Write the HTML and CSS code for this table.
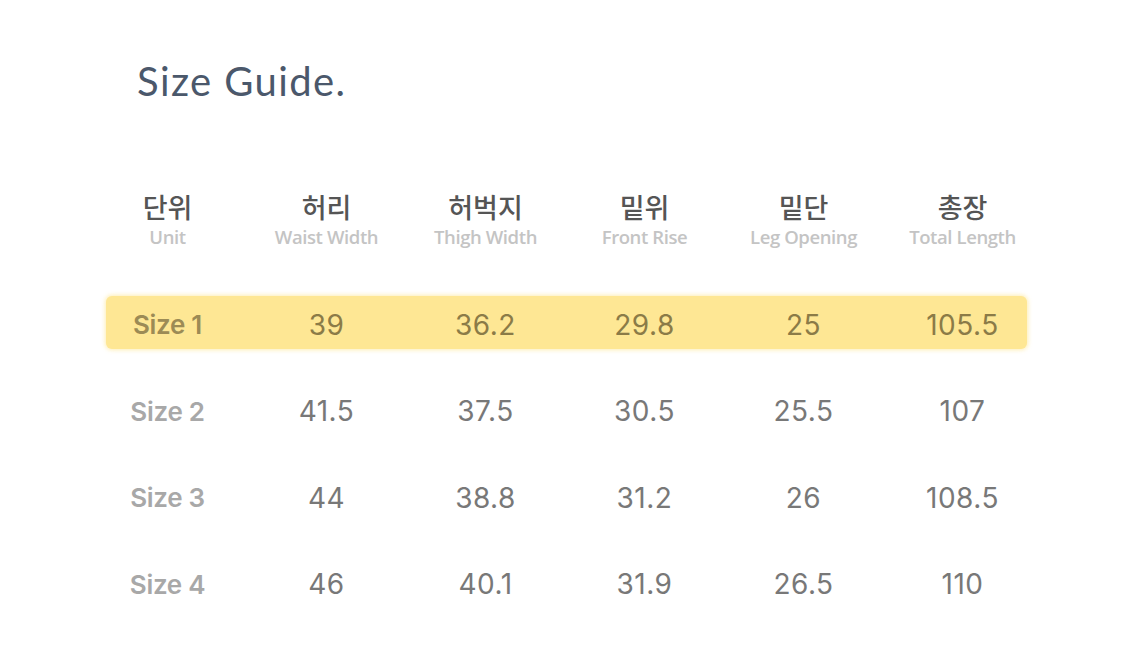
FILE: index.html
```html
<!DOCTYPE html>
<html lang="ko">
<head>
<meta charset="utf-8">
<title>Size Guide</title>
<link rel="stylesheet" href="styles.css">
</head>
<body>
<main class="page">
  <h1 class="title">Size Guide.</h1>
  <div class="table">
    <div class="row head">
      <div class="cell"><span class="ko">단위</span><span class="en">Unit</span></div>
      <div class="cell"><span class="ko">허리</span><span class="en">Waist Width</span></div>
      <div class="cell"><span class="ko">허벅지</span><span class="en">Thigh Width</span></div>
      <div class="cell"><span class="ko">밑위</span><span class="en">Front Rise</span></div>
      <div class="cell"><span class="ko">밑단</span><span class="en">Leg Opening</span></div>
      <div class="cell"><span class="ko">총장</span><span class="en">Total Length</span></div>
    </div>
    <div class="row data hl">
      <div class="cell label">Size 1</div>
      <div class="cell">39</div>
      <div class="cell">36.2</div>
      <div class="cell">29.8</div>
      <div class="cell">25</div>
      <div class="cell">105.5</div>
    </div>
    <div class="row data">
      <div class="cell label">Size 2</div>
      <div class="cell">41.5</div>
      <div class="cell">37.5</div>
      <div class="cell">30.5</div>
      <div class="cell">25.5</div>
      <div class="cell">107</div>
    </div>
    <div class="row data">
      <div class="cell label">Size 3</div>
      <div class="cell">44</div>
      <div class="cell">38.8</div>
      <div class="cell">31.2</div>
      <div class="cell">26</div>
      <div class="cell">108.5</div>
    </div>
    <div class="row data">
      <div class="cell label">Size 4</div>
      <div class="cell">46</div>
      <div class="cell">40.1</div>
      <div class="cell">31.9</div>
      <div class="cell">26.5</div>
      <div class="cell">110</div>
    </div>
  </div>
</main>
</body>
</html>
```
FILE: styles.css
```css
html, body {
  margin: 0;
  padding: 0;
  background: #ffffff;
}
.page {
  width: 1125px;
  height: 672px;
  box-sizing: border-box;
  padding: 0 0 0 88px;
  font-family: "Inter", "Noto Sans CJK KR", sans-serif;
}
.title {
  margin: 0;
  padding: 56px 0 0 49px;
  height: 50px;
  font-family: "Lato", sans-serif;
  font-weight: 400;
  font-size: 40px;
  line-height: 50px;
  color: #4b586b;
  letter-spacing: 1.4px;
}
.table {
  margin-top: 79px;
  width: 954px;
}
.row {
  display: grid;
  grid-template-columns: repeat(6, 159px);
  align-items: center;
  justify-items: center;
}
.head {
  height: 70px;
  margin-bottom: 41px;
}
.head .cell {
  display: flex;
  flex-direction: column;
  align-items: center;
  gap: 6px;
}
.ko {
  font-family: "Noto Sans CJK KR", sans-serif;
  font-weight: 500;
  font-size: 27px;
  line-height: 28px;
  color: #555555;
}
.en {
  font-family: "Open Sans", sans-serif;
  font-weight: 600;
  font-size: 18.5px;
  line-height: 20px;
  color: #c4c4c4;
  letter-spacing: -0.4px;
  white-space: nowrap;
}
.data {
  height: 86.5px;
  font-size: 28px;
  font-weight: 400;
  color: #787878;
  position: relative;
  letter-spacing: 0.5px;
}
.data .cell { position: relative; }
.label {
  font-size: 26px;
  font-weight: 600;
  color: #a8a8a8;
  letter-spacing: -0.3px;
}
.hl {
  height: 53px;
  margin-bottom: 19px;
}
.hl .cell { top: 2px; }
.hl::before {
  content: "";
  position: absolute;
  top: 0;
  bottom: 0;
  left: 18px;
  right: 15px;
  background: #fee794;
  border-radius: 6px;
  box-shadow: 0 0 4px 1px rgba(254, 231, 148, 0.7);
}
.hl .cell { color: #8b7b47; }
.hl .label { color: #9c8b55; }
```
